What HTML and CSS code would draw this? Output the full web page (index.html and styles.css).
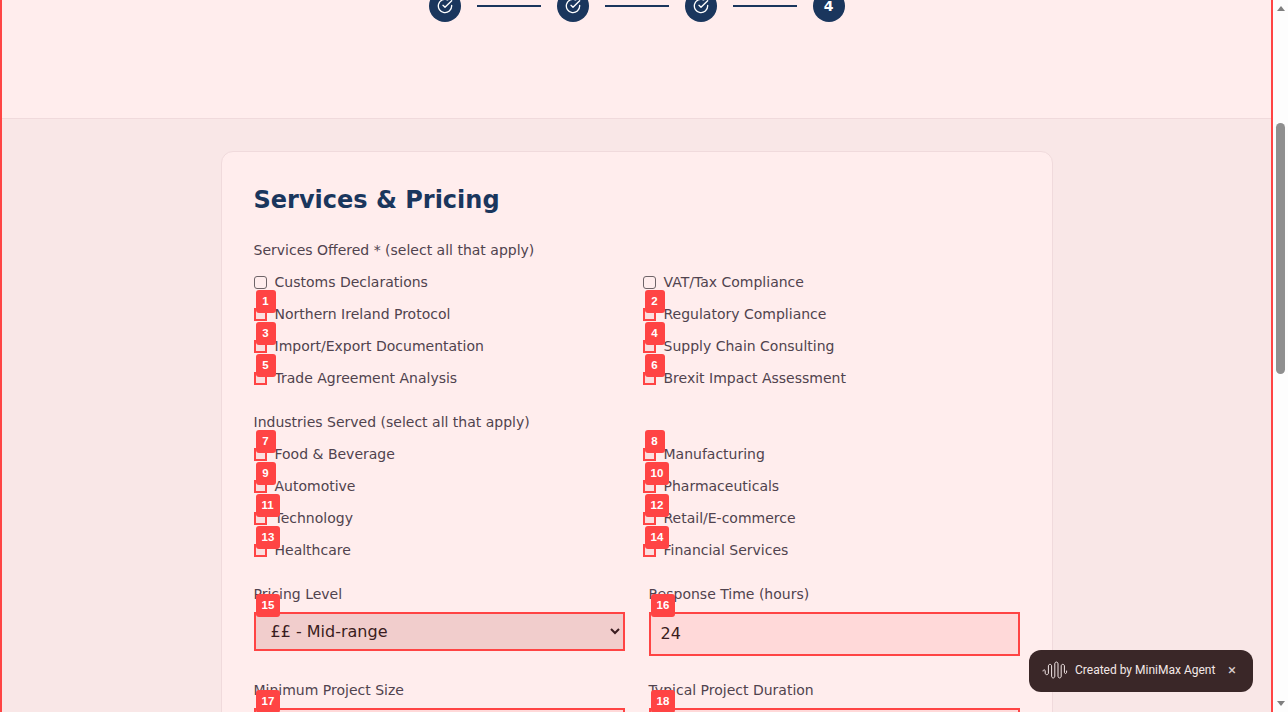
FILE: index.html
```html
<!DOCTYPE html>
<html lang="en">
<head>
    <meta charset="UTF-8">
    <meta name="viewport" content="width=device-width, initial-scale=1.0">
    <title>Services &amp; Pricing</title>
    <link rel="stylesheet" href="styles.css">
</head>
<body>
    <div class="window">
        <div class="page">
            <header class="steps-bar">
                <div class="steps">
                    <div class="step"><svg class="step-check" viewBox="0 0 24 24"><path d="M22 11.08V12a10 10 0 1 1-5.93-9.14"/><path d="M22 4 12 14.01l-3-3"/></svg></div>
                    <div class="step-line"></div>
                    <div class="step"><svg class="step-check" viewBox="0 0 24 24"><path d="M22 11.08V12a10 10 0 1 1-5.93-9.14"/><path d="M22 4 12 14.01l-3-3"/></svg></div>
                    <div class="step-line"></div>
                    <div class="step"><svg class="step-check" viewBox="0 0 24 24"><path d="M22 11.08V12a10 10 0 1 1-5.93-9.14"/><path d="M22 4 12 14.01l-3-3"/></svg></div>
                    <div class="step-line"></div>
                    <div class="step">4</div>
                </div>
            </header>

            <main class="content">
                <form class="card">
                    <h2>Services &amp; Pricing</h2>

                    <p class="group-label">Services Offered * (select all that apply)</p>
                    <div class="check-grid">
                        <label class="check"><input type="checkbox" class="plain-box"> Customs Declarations</label>
                        <label class="check"><input type="checkbox" class="plain-box"> VAT/Tax Compliance</label>
                        <label class="check"><span class="badge">1</span><input type="checkbox"> Northern Ireland Protocol</label>
                        <label class="check"><span class="badge">2</span><input type="checkbox"> Regulatory Compliance</label>
                        <label class="check"><span class="badge">3</span><input type="checkbox"> Import/Export Documentation</label>
                        <label class="check"><span class="badge">4</span><input type="checkbox"> Supply Chain Consulting</label>
                        <label class="check"><span class="badge">5</span><input type="checkbox"> Trade Agreement Analysis</label>
                        <label class="check"><span class="badge">6</span><input type="checkbox"> Brexit Impact Assessment</label>
                    </div>

                    <p class="group-label">Industries Served (select all that apply)</p>
                    <div class="check-grid">
                        <label class="check"><span class="badge">7</span><input type="checkbox"> Food &amp; Beverage</label>
                        <label class="check"><span class="badge">8</span><input type="checkbox"> Manufacturing</label>
                        <label class="check"><span class="badge">9</span><input type="checkbox"> Automotive</label>
                        <label class="check"><span class="badge">10</span><input type="checkbox"> Pharmaceuticals</label>
                        <label class="check"><span class="badge">11</span><input type="checkbox"> Technology</label>
                        <label class="check"><span class="badge">12</span><input type="checkbox"> Retail/E-commerce</label>
                        <label class="check"><span class="badge">13</span><input type="checkbox"> Healthcare</label>
                        <label class="check"><span class="badge">14</span><input type="checkbox"> Financial Services</label>
                    </div>

                    <div class="field-grid">
                        <div class="field">
                            <label class="group-label">Pricing Level</label>
                            <div class="control">
                                <span class="badge">15</span>
                                <select class="select-input">
                                    <option>££ - Mid-range</option>
                                </select>
                            </div>
                        </div>
                        <div class="field">
                            <label class="group-label">Response Time (hours)</label>
                            <div class="control">
                                <span class="badge">16</span>
                                <input type="number" class="text-input" value="24">
                            </div>
                        </div>
                        <div class="field">
                            <label class="group-label">Minimum Project Size</label>
                            <div class="control">
                                <span class="badge">17</span>
                                <input type="text" class="text-input">
                            </div>
                        </div>
                        <div class="field">
                            <label class="group-label">Typical Project Duration</label>
                            <div class="control">
                                <span class="badge">18</span>
                                <input type="text" class="text-input">
                            </div>
                        </div>
                    </div>
                </form>
            </main>
        </div>

        <div class="scrollbar">
            <div class="arrow-up"></div>
            <div class="thumb"></div>
            <div class="arrow-down"></div>
        </div>
    </div>

    <div class="agent-toast">
        <svg class="agent-wave" viewBox="0 0 26 18"><path d="M1 10c0-1.600 2.200-1.600 2.200 0v2c0 2.200 3.200 2.200 3.200 0V5c0-2.200 3.200-2.200 3.200 0v10c0 2.600 3.200 2.600 3.200 0V3c0-2.600 3.200-2.600 3.200 0v12c0 2.600 3.200 2.600 3.200 0V5c0-2.200 3.200-2.200 3.200 0v6c0 2 2.200 2 2.200 0v-1"/></svg>
        <span class="agent-text">Created by MiniMax Agent</span>
        <span class="agent-close">×</span>
    </div>
</body>
</html>
```

FILE: styles.css
```css
html, body {
    margin: 0;
    padding: 0;
    height: 712px;
    overflow: hidden;
}
body {
    font-family: "DejaVu Sans", sans-serif;
    color: #50434e;
    background-color: #fff;
}
.window {
    display: flex;
    height: 712px;
}
.page {
    width: 1273px;
    box-sizing: border-box;
    border-left: 2px solid #ff4444;
    border-right: 2px solid #ff4444;
    background-color: #f9e7e7;
    overflow: hidden;
}

/* step indicator, the page is scrolled so its top is cut off */
.steps-bar {
    display: flow-root;
    height: 119px;
    box-sizing: border-box;
    background-color: #ffeded;
    border-bottom: 1px solid #f0dadc;
}
.steps {
    display: flex;
    justify-content: center;
    align-items: center;
    gap: 16px;
    margin-top: -10px;
}
.step {
    display: flex;
    align-items: center;
    justify-content: center;
    width: 32px;
    height: 32px;
    border-radius: 50%;
    background-color: #1a365d;
    color: #fff;
    font-size: 14px;
    font-weight: 700;
}
.step-check {
    width: 16px;
    height: 16px;
    fill: none;
    stroke: #fff;
    stroke-width: 2;
    stroke-linecap: round;
    stroke-linejoin: round;
}
.step-line {
    width: 64px;
    height: 2px;
    background-color: #1a365d;
}

.content {
    padding-top: 32px;
}
.card {
    width: 832px;
    box-sizing: border-box;
    margin: 0 auto;
    padding: 32px;
    background-color: #ffeded;
    border: 1px solid #f0dadc;
    border-radius: 12px;
}
h2 {
    margin: 0 0 24px;
    font-size: 24px;
    line-height: 32px;
    font-weight: 700;
    color: #1a365d;
}
.group-label {
    display: block;
    margin: 0 0 12px;
    font-size: 14px;
    line-height: 20px;
}

.check-grid {
    display: grid;
    grid-template-columns: 1fr 1fr;
    gap: 12px;
    margin-bottom: 24px;
}
.check {
    position: relative;
    display: flex;
    align-items: center;
    gap: 8px;
    font-size: 14px;
    line-height: 20px;
}
.check input {
    appearance: none;
    width: 13px;
    height: 13px;
    margin: 0;
    box-sizing: border-box;
    border: 2px solid #ff4444;
    background-color: #fbdfdf;
}
.check .plain-box {
    border: 1px solid #6e6468;
    border-radius: 3px;
    background-color: #ffeded;
}

.badge {
    position: absolute;
    left: 2px;
    top: -14px;
    min-width: 20px;
    box-sizing: border-box;
    padding: 4px 6px;
    border-radius: 3px;
    background-color: #ff4444;
    color: #fff;
    font-family: "Liberation Sans", Arial, sans-serif;
    font-size: 11.5px;
    font-weight: 700;
    line-height: 15px;
    text-align: center;
}

.field-grid {
    display: grid;
    grid-template-columns: 1fr 1fr;
    column-gap: 24px;
    row-gap: 24px;
}
.field .group-label {
    margin-bottom: 8px;
}
.control {
    position: relative;
}
.control .badge {
    top: -18px;
}
.select-input, .text-input {
    display: block;
    width: 100%;
    box-sizing: border-box;
    border: 2px solid #ff4444;
    border-radius: 0;
    outline: none;
    color: #3a1c20;
    font-family: "DejaVu Sans", sans-serif;
    font-size: 16px;
}
.select-input {
    height: 39px;
    padding: 7px 11px 9px;
    background-color: #f1cdcc;
}
.text-input {
    height: 44px;
    padding: 11px 10px 13px;
    background-color: #ffd9d9;
}

/* fake classic scrollbar */
.scrollbar {
    display: flex;
    flex-direction: column;
    align-items: center;
    width: 15px;
    background-color: #fdfdfd;
}
.arrow-up, .arrow-down {
    width: 0;
    height: 0;
    border-left: 4.5px solid transparent;
    border-right: 4.5px solid transparent;
}
.arrow-up {
    margin-top: 6px;
    border-bottom: 5px solid #7f7f7f;
}
.thumb {
    width: 9px;
    height: 251px;
    margin-top: 112px;
    border-radius: 5px;
    background-color: #8f8f8f;
}
.arrow-down {
    margin-top: auto;
    margin-bottom: 6px;
    border-top: 5px solid #7f7f7f;
}

/* floating badge, bottom right */
.agent-toast {
    position: fixed;
    left: 1029px;
    top: 650px;
    display: flex;
    align-items: center;
    width: 224px;
    height: 42px;
    box-sizing: border-box;
    padding: 0 16px 2px 13px;
    border-radius: 12px;
    background-color: #3a2728;
    color: #f3e7e7;
    font-family: Roboto, sans-serif;
    font-size: 12px;
}
.agent-wave {
    width: 26px;
    height: 18px;
    fill: none;
    stroke: #f3e7e7;
    stroke-width: 1;
    stroke-linecap: round;
}
.agent-text {
    margin-left: 7px;
}
.agent-close {
    margin-left: auto;
    margin-right: 1px;
    font-size: 15px;
    line-height: 15px;
    color: #d8cccc;
}
```
